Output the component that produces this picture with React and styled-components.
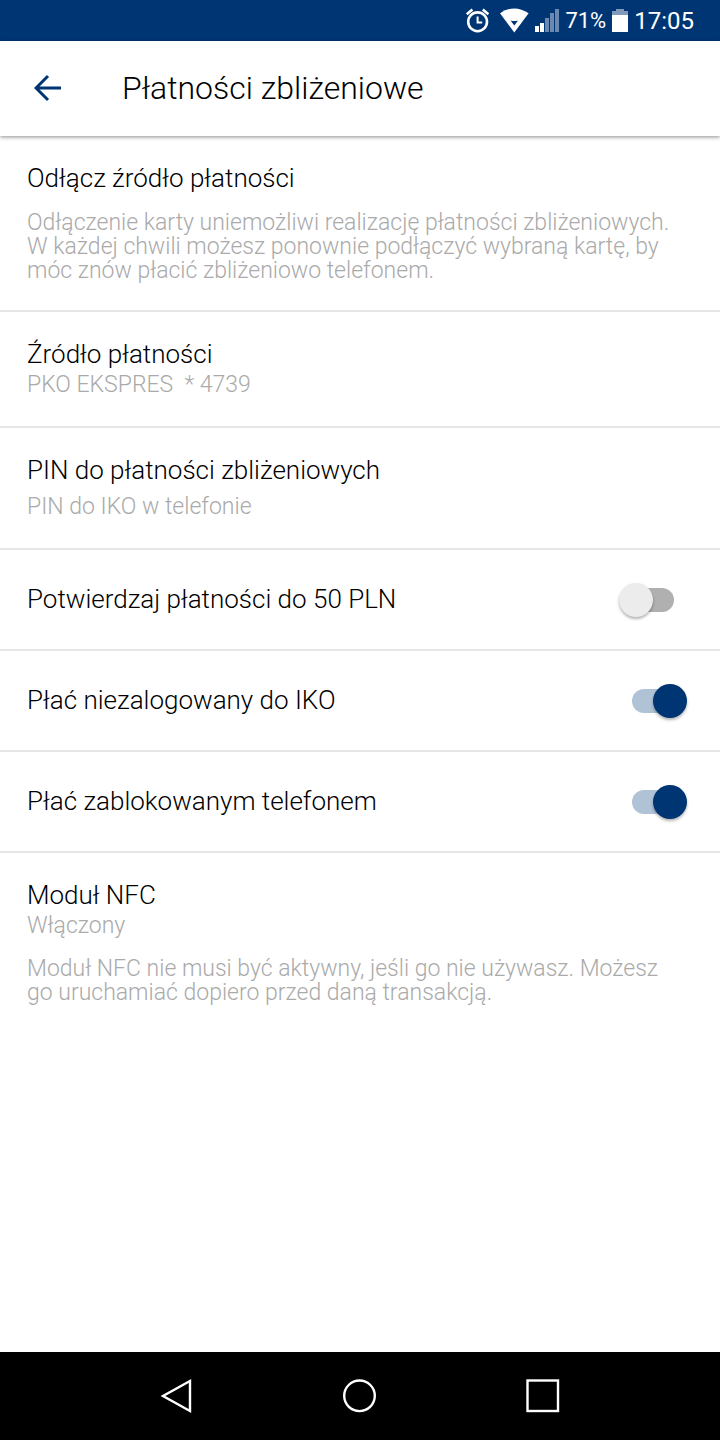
import React, { useState } from 'react';
import styled, { createGlobalStyle } from 'styled-components';

const App = () => {
	const [confirmSmall, setConfirmSmall] = useState(false);
	const [payLoggedOut, setPayLoggedOut] = useState(true);
	const [payLocked, setPayLocked] = useState(true);

	return (
		<StyledScreen>
			<GlobalStyle />
			<StyledStatusBar>
				<AlarmIcon />
				<WifiIcon />
				<SignalIcon />
				<StyledPercent>71%</StyledPercent>
				<BatteryIcon />
				<StyledClock>17:05</StyledClock>
			</StyledStatusBar>
			<StyledHeader>
				<StyledBack type="button" aria-label="Wstecz">
					<svg width="28" height="28" viewBox="0 0 28 28" fill="none">
						<path
							d="M27 14H3M14 2L2 14l12 12"
							stroke="#003574"
							strokeWidth="3"
						/>
					</svg>
				</StyledBack>
				<StyledHeading>Płatności zbliżeniowe</StyledHeading>
			</StyledHeader>
			<StyledMain>
				<StyledSection>
					<StyledTitle>Odłącz źródło płatności</StyledTitle>
					<StyledNote>
						Odłączenie karty uniemożliwi realizację płatności
						zbliżeniowych. W każdej chwili możesz ponownie podłączyć
						wybraną kartę, by móc znów płacić zbliżeniowo telefonem.
					</StyledNote>
				</StyledSection>
				<StyledSection>
					<StyledTitle>Źródło płatności</StyledTitle>
					<StyledValue>{'PKO EKSPRES  * 4739'}</StyledValue>
				</StyledSection>
				<StyledSection>
					<StyledTitle>PIN do płatności zbliżeniowych</StyledTitle>
					<StyledValue $spaced>PIN do IKO w telefonie</StyledValue>
				</StyledSection>
				<SwitchRow
					label="Potwierdzaj płatności do 50 PLN"
					checked={confirmSmall}
					onChange={setConfirmSmall}
				/>
				<SwitchRow
					label="Płać niezalogowany do IKO"
					checked={payLoggedOut}
					onChange={setPayLoggedOut}
				/>
				<SwitchRow
					label="Płać zablokowanym telefonem"
					checked={payLocked}
					onChange={setPayLocked}
				/>
				<StyledSection>
					<StyledTitle>Moduł NFC</StyledTitle>
					<StyledValue>Włączony</StyledValue>
					<StyledNote>
						Moduł NFC nie musi być aktywny, jeśli go nie używasz.
						Możesz go uruchamiać dopiero przed daną transakcją.
					</StyledNote>
				</StyledSection>
			</StyledMain>
			<StyledNav>
				<StyledNavButton type="button" aria-label="Cofnij">
					<svg width="36" height="36" viewBox="0 0 36 36" fill="none">
						<path
							d="M31 3v30L4 18z"
							stroke="#fff"
							strokeWidth="2.4"
						/>
					</svg>
				</StyledNavButton>
				<StyledNavButton type="button" aria-label="Ekran główny">
					<svg width="36" height="36" viewBox="0 0 36 36" fill="none">
						<circle
							cx="17.5"
							cy="17.8"
							r="15.3"
							stroke="#fff"
							strokeWidth="2.4"
						/>
					</svg>
				</StyledNavButton>
				<StyledNavButton type="button" aria-label="Ostatnie">
					<svg width="36" height="36" viewBox="0 0 36 36" fill="none">
						<rect
							x="2.5"
							y="2.5"
							width="30.5"
							height="30.5"
							stroke="#fff"
							strokeWidth="2.4"
						/>
					</svg>
				</StyledNavButton>
			</StyledNav>
		</StyledScreen>
	);
};

const SwitchRow = ({ label, checked, onChange }) => (
	<StyledSwitchRow>
		<StyledLabel>{label}</StyledLabel>
		<StyledSwitch
			type="checkbox"
			checked={checked}
			onChange={(e) => onChange(e.target.checked)}
		/>
	</StyledSwitchRow>
);

const AlarmIcon = () => (
	<svg width="24" height="26" viewBox="-1 1 24 26" fill="none">
		<circle cx="11.6" cy="14.8" r="9.4" stroke="#fff" strokeWidth="2.6" />
		<path d="M11.6 9.4v6h4.6" stroke="#fff" strokeWidth="2" />
		<path d="M0.8 7.2L6.4 2.6M22.4 7.2L16.8 2.6" stroke="#fff" strokeWidth="2.6" />
	</svg>
);

const WifiIcon = () => (
	<svg width="30" height="26" viewBox="-1 1 30 26">
		<path d="M0 6.2Q14.3-3.4 28.6 6.2L14.3 25.4z" fill="#fff" />
		<path d="M10.5 13.6q3.8 1 7.6 0L14.3 18.6z" fill="#003574" />
	</svg>
);

const SignalIcon = () => (
	<svg width="24" height="26" viewBox="0 1 24 26">
		<path d="M0 19h4v6H0zM5 16h4v9H5z" fill="#fff" />
		<path
			d="M10 11h4v14h-4zM15 6h4v19h-4zM20 2h4v23h-4z"
			fill="#6b89b0"
		/>
	</svg>
);

const BatteryIcon = () => (
	<svg width="16" height="26" viewBox="0 1 16 26">
		<path d="M4 2h8v2h4v4H0V4h4z" fill="#7f9abb" />
		<path d="M0 8h16v17H0z" fill="#fff" />
	</svg>
);

const GlobalStyle = createGlobalStyle`
	* {
		box-sizing: border-box;
	}
	body {
		margin: 0;
		background: #fff;
		font-family: Roboto, 'Open Sans', sans-serif;
		font-weight: 300;
	}
`;

const StyledScreen = styled.div`
	display: flex;
	flex-direction: column;
	min-height: 100vh;
`;

const StyledStatusBar = styled.div`
	display: flex;
	align-items: center;
	justify-content: flex-end;
	gap: 6px;
	height: 41px;
	padding-right: 26px;
	background: #003574;
	color: #fff;
	font-weight: 400;

	svg:first-child {
		margin-right: 4px;
	}
`;

const StyledPercent = styled.span`
	font-size: 22px;
`;

const StyledClock = styled.span`
	font-size: 24px;
`;

const StyledHeader = styled.header`
	display: flex;
	align-items: center;
	height: 95px;
	padding: 0 34px 2px;
	box-shadow: 0 1px 4px rgba(0, 0, 0, 0.45);
`;

const StyledBack = styled.button`
	display: flex;
	width: 88px;
	padding: 0;
	border: none;
	background: none;
`;

const StyledHeading = styled.h1`
	margin: 0;
	color: #000;
	font-size: 32px;
	font-weight: 300;
`;

const StyledMain = styled.main`
	flex: 1;
`;

const StyledSection = styled.section`
	padding: 26px 40px 27px 27px;
	border-bottom: 2px solid #e6e6e6;

	&:last-child {
		border-bottom: none;
	}
`;

const StyledTitle = styled.h2`
	margin: 0;
	color: #000;
	font-size: 26px;
	font-weight: 300;
	line-height: 32px;
`;

const StyledValue = styled.div`
	margin-top: ${(props) => (props.$spaced ? '7px' : '1px')};
	color: #aaa;
	font-size: 23px;
	line-height: 28px;
	white-space: pre-wrap;
`;

const StyledNote = styled.p`
	margin: 17px 0 0;
	color: #aaa;
	font-size: 23px;
	line-height: 24px;
`;

const StyledSwitchRow = styled.label`
	display: flex;
	align-items: center;
	justify-content: space-between;
	height: 101px;
	padding: 0 33px 0 27px;
	border-bottom: 2px solid #e6e6e6;
`;

const StyledLabel = styled.span`
	padding-bottom: 2px;
	color: #000;
	font-size: 26px;
	line-height: 32px;
`;

const StyledSwitch = styled.input`
	appearance: none;
	display: flex;
	align-items: center;
	width: 68px;
	height: 34px;
	margin: 0;

	&::before {
		content: '';
		width: 42px;
		height: 24px;
		margin-left: 13px;
		border-radius: 12px;
		background: ${(props) => (props.checked ? '#b0c2d6' : '#b0b0b0')};
	}

	&::after {
		content: '';
		width: 34px;
		height: 34px;
		margin-left: ${(props) => (props.checked ? '-21px' : '-55px')};
		border-radius: 50%;
		background: ${(props) => (props.checked ? '#003574' : '#ececec')};
		box-shadow: 0 2px 3px rgba(0, 0, 0, 0.3);
	}
`;

const StyledNav = styled.nav`
	display: flex;
	align-items: center;
	justify-content: space-around;
	height: 88px;
	padding: 0 86px;
	background: #000;
`;

const StyledNavButton = styled.button`
	display: flex;
	padding: 0;
	border: none;
	background: none;
`;

export default App;
